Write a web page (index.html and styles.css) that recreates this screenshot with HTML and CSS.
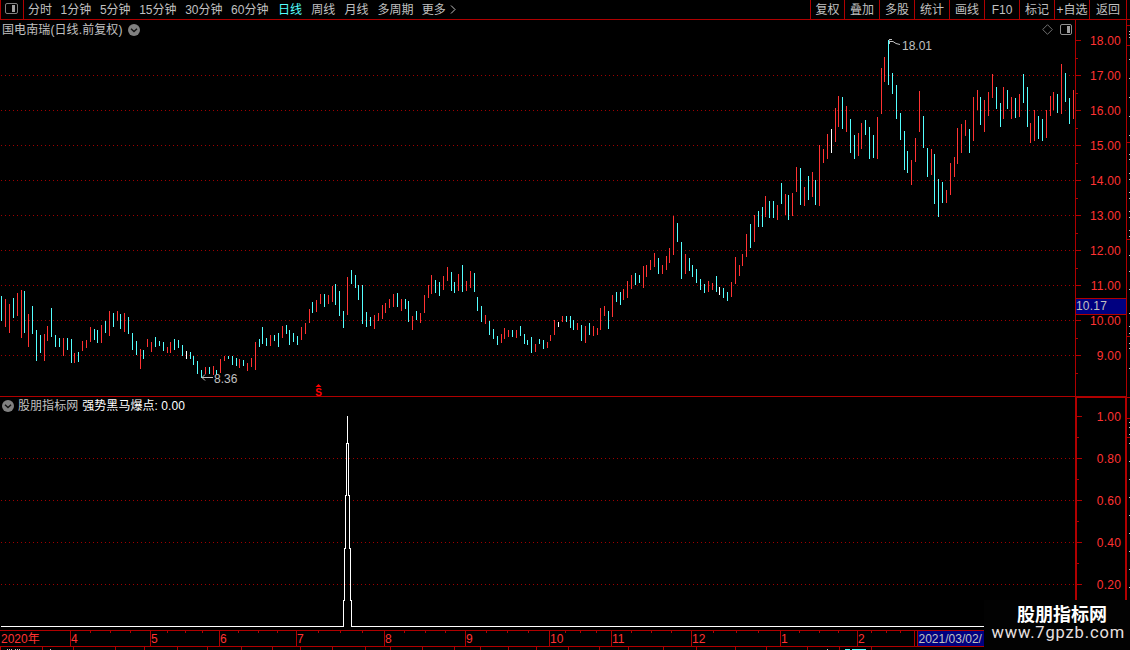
FILE: index.html
```
<!DOCTYPE html>
<html lang="zh-CN">
<head>
    <meta charset="utf-8">
    <title>国电南瑞 日线</title>
    <link rel="stylesheet" href="styles.css">
</head>
<body>
    <div class="terminal">
        <div class="toolbar">
            <div class="panel-toggle">
                <svg width="13" height="11" viewBox="0 0 13 11">
                    <rect x="0.5" y="0.5" width="12" height="10" rx="1.5" fill="none" stroke="#808080"/>
                    <rect x="7" y="2" width="3" height="7" fill="#a0a0a0"/>
                </svg>
            </div>
            <div class="periods minutes">
                <span>分时</span>
                <span>1分钟</span>
                <span>5分钟</span>
                <span>15分钟</span>
                <span>30分钟</span>
                <span>60分钟</span>
            </div>
            <div class="periods days">
                <span class="active">日线</span>
                <span>周线</span>
                <span>月线</span>
                <span>多周期</span>
                <span class="more">更多
                    <svg width="6" height="9" viewBox="0 0 6 9"><path d="M1 0.5L5 4.5L1 8.5" fill="none" stroke="#c0c0c0"/></svg>
                </span>
            </div>
            <div class="tools">
                <span>复权</span>
                <span>叠加</span>
                <span>多股</span>
                <span>统计</span>
                <span>画线</span>
                <span>F10</span>
                <span>标记</span>
                <span>+自选</span>
                <span>返回</span>
            </div>
        </div>

        <div class="content">
            <div class="charts">
                <div class="pane price">
                    <svg class="plot" id="pricePlot" width="1075" height="376" viewBox="0 20 1075 376">
                        <g id="priceGrid" class="grid"></g>
                        <path id="barsUp" class="bar up"/>
                        <path id="barsDown" class="bar down"/>
                        <path id="barsFlat" class="bar flat"/>
                        <path class="arrow" d="M889.5 44V40.5M889 39.5H892M889 41.5H893L896 43.5L900 44.5"/>
                        <text class="note" x="902" y="50">18.01</text>
                        <path class="arrow" d="M213 377.5H202M205 374.5L202 377.5L205 380.5"/>
                        <text class="note" x="214" y="383">8.36</text>
                        <path class="signal" d="M318.5 384L321.5 387H315.5Z"/>
                        <text class="signal" x="315.2" y="395.5">S</text>
                    </svg>
                    <div class="pane-title">
                        <span>国电南瑞(日线.前复权)</span>
                        <svg width="12" height="12" viewBox="0 0 12 12"><circle cx="6" cy="6" r="6" fill="#808080"/><path d="M3 4.7L6 7.5L9 4.7" fill="none" stroke="#111" stroke-width="1.4"/></svg>
                    </div>
                    <div class="pane-icons">
                        <svg width="11" height="11" viewBox="0 0 11 11"><path d="M5.5 0.7L10.3 5.5L5.5 10.3L0.7 5.5Z" fill="none" stroke="#707070"/></svg>
                        <svg width="12" height="11" viewBox="0 0 12 11"><rect x="0.5" y="0.5" width="11" height="10" rx="1.5" fill="none" stroke="#909090"/><rect x="7" y="2" width="3" height="7" fill="#a0a0a0"/></svg>
                    </div>
                </div>
                <div class="axis price-axis">
                    <span>18.00</span>
                    <span>17.00</span>
                    <span>16.00</span>
                    <span>15.00</span>
                    <span>14.00</span>
                    <span>13.00</span>
                    <span>12.00</span>
                    <span>11.00</span>
                    <span>10.00</span>
                    <span>9.00</span>
                    <div class="cursor-price">10.17</div>
                </div>

                <div class="pane indicator">
                    <svg class="plot" width="1075" height="233" viewBox="0 397 1075 233">
                        <g id="indicatorGrid" class="grid"></g>
                        <path class="line" d="M1 626.5H343.5V600H344.5V548H345.5V495H346.5V443H347.5V416V443H348.5V495H349.5V548H350.5V600H351.5V626.5H1075"/>
                    </svg>
                    <div class="pane-title">
                        <svg width="12" height="12" viewBox="0 0 12 12"><circle cx="6" cy="6" r="6" fill="#808080"/><path d="M3 4.7L6 7.5L9 4.7" fill="none" stroke="#111" stroke-width="1.4"/></svg>
                        <span>股朋指标网</span>
                        <span class="value">强势黑马爆点: 0.00</span>
                    </div>
                </div>
                <div class="axis indicator-axis">
                    <span>1.00</span>
                    <span>0.80</span>
                    <span>0.60</span>
                    <span>0.40</span>
                    <span>0.20</span>
                </div>
            </div>
            <svg class="side-strip" width="3" height="630" viewBox="1127 20 3 630">
                <path id="sideWhite" stroke="#c0c0c0"/>
                <path id="sideRed" stroke="#b00000"/>
            </svg>
        </div>

        <svg class="dates" width="1130" height="20" viewBox="0 630 1130 20">
            <path id="dateTicks" class="tick"/>
            <g id="dateLabels"></g>
            <rect x="918" y="631" width="70" height="15" fill="#000080"/>
            <text class="note" x="918.5" y="642.5">2021/03/02/</text>
            <path d="M7 649.5H13M15 649.5H18M19 649.5H21M50 649.5H52M827 649.5H829" stroke="#c0c0c0" stroke-dasharray="1 1"/>
            <path d="M845 649.5H850M852 649.5H866" stroke="#54ffff"/>
        </svg>

        <div class="watermark">
            <div class="site-name">股朋指标网</div>
            <div class="site-url">www.7gpzb.com</div>
        </div>
    </div>
    <script src="chart.js"></script>
</body>
</html>
```
FILE: styles.css
```
body {
    margin: 0;
    background-color: #000;
    color: #c0c0c0;
    font-family: "Liberation Sans", "Noto Sans CJK SC", sans-serif;
    font-size: 12px;
    line-height: 14px;
}
svg {
    display: block;
}
.terminal {
    position: relative;
    width: 1130px;
    height: 650px;
    overflow: hidden;
}
.toolbar {
    box-sizing: border-box;
    display: flex;
    height: 20px;
    border-bottom: 1px solid #b00000;
    line-height: 20px;
    white-space: nowrap;
}
.panel-toggle {
    box-sizing: border-box;
    width: 24px;
    padding: 3px 0 0 4px;
    border-left: 1px solid #b00000;
    border-right: 1px solid #b00000;
}
.periods {
    display: flex;
    height: 19px;
}
.minutes {
    box-sizing: border-box;
    width: 254px;
    padding-left: 4px;
    gap: 8.6px;
}
.days {
    gap: 9.2px;
}
.active {
    color: #54ffff;
}
.more {
    display: flex;
    align-items: center;
    gap: 4px;
    margin-left: -1px;
}
.tools {
    display: grid;
    grid-template-columns: 34px 35px 35px 35px 35px 35px 35px 35px 37px;
    height: 19px;
    margin-left: auto;
    margin-right: 3px;
    border-right: 1px solid #b00000;
}
.tools span {
    height: 19px;
    border-left: 1px solid #b00000;
    text-align: center;
}
.content {
    display: flex;
    height: 610px;
}
.charts {
    display: grid;
    grid-template-columns: 1075px 52px;
    grid-template-rows: 376px 234px;
}
.pane {
    position: relative;
}
.indicator {
    border-top: 1px solid #b00000;
}
.pane-title {
    position: absolute;
    top: 3px;
    left: 2px;
    display: flex;
    align-items: center;
    gap: 5px;
    white-space: nowrap;
}
.price .pane-title {
    letter-spacing: 0.1px;
}
.price .pane-title svg,
.indicator .pane-title svg {
    margin-top: -1px;
}
.indicator .pane-title {
    top: 2px;
    gap: 4px;
    letter-spacing: 0.05px;
}
.value {
    color: #fff;
}
.pane-icons {
    position: absolute;
    top: 4px;
    right: 3px;
    display: flex;
    gap: 7px;
}
.axis {
    position: relative;
    box-sizing: border-box;
    display: flex;
    flex-direction: column;
    color: #ff3232;
    text-align: right;
    letter-spacing: 0.2px;
}
.axis span {
    position: relative;
    padding-right: 5px;
}
/* major tick at each value, minor tick half a step below */
.axis span::before,
.axis span::after {
    content: "";
    position: absolute;
    left: 0;
    top: 50%;
    width: 5px;
    height: 1px;
    margin-top: -0.5px;
    background-color: #b00000;
}
.axis span::after {
    top: 100%;
    width: 2px;
}
.price-axis {
    padding-top: 3px;
    border-left: 1px solid #b00000;
    border-right: 1px solid #b00000;
}
.price-axis span {
    height: 35px;
    line-height: 36px;
}
.indicator-axis {
    border: 2px solid #b00000;
    border-bottom: none;
}
.indicator-axis span {
    top: -3px;
    height: 42px;
    padding-right: 4px;
    line-height: 44px;
}
.cursor-price {
    position: absolute;
    top: 278px;
    left: 0;
    width: 50px;
    height: 15px;
    border-top: 1px solid #b00000;
    border-bottom: 1px solid #b00000;
    background-color: #000080;
    color: #c0c0c0;
    text-align: left;
}
.grid line {
    stroke: #a00000;
    stroke-dasharray: 1 3;
}
.bar {
    fill: none;
    shape-rendering: crispEdges;
}
.up {
    stroke: #ff3232;
}
.down {
    stroke: #54ffff;
}
.flat {
    stroke: #fff;
}
.line {
    fill: none;
    stroke: #fff;
    shape-rendering: crispEdges;
}
.arrow {
    fill: none;
    stroke: #c0c0c0;
}
.note {
    fill: #c0c0c0;
}
.signal {
    fill: #f00;
    font-size: 10px;
    font-weight: bold;
}
.dates {
    background-color: #000;
}
.tick {
    fill: none;
    stroke: #b00000;
}
.month {
    fill: #ff3232;
}
.watermark {
    position: absolute;
    right: 0;
    bottom: 0;
    box-sizing: border-box;
    width: 146px;
    height: 50px;
    padding-top: 3px;
    padding-right: 5px;
    background-color: #020202;
    color: #fff;
    text-align: right;
    white-space: nowrap;
}
.site-name {
    padding-right: 18px;
    font-family: "Noto Sans CJK SC", sans-serif;
    font-size: 18px;
    font-weight: bold;
    line-height: 21px;
}
.site-url {
    color: #e8e0e0;
    font-family: Roboto, sans-serif;
    font-size: 16.5px;
    line-height: 18px;
    letter-spacing: 0.85px;
}
```
FILE: chart.js
```
// daily bars: x, high, low, direction (r = up, c = down, w = flat)
var bars = "1 296 321c,5 299 327r,9 304 333r,13 298 318c,17 293 316r,21 290 338r,24 291 333c,28 314 347r,32 306 334c," +
    "36 330 361c,40 335 353c,44 334 361r,47 326 341r,51 308 337c,55 335 347c,59 338 347c,63 338 356r,67 338 350c," +
    "71 339 363c,74 353 363r,78 352 362c,82 341 351r,86 340 348r,90 327 342r,94 329 340c,97 330 343c,101 325 343r," +
    "105 321 333c,109 311 336r,113 313 327c,117 311 321r,120 314 329c,124 313 332r,128 317 334c,132 333 350c," +
    "136 341 355c,140 349 369r,143 350 359c,147 339 347r,151 342 352r,155 337 347c,159 341 346c,163 342 351c," +
    "167 347 353r,170 342 353r,174 339 350c,178 340 348c,182 345 356c,186 351 359w,190 352 359c,193 356 365c," +
    "197 361 374c,201 370 378c,205 367 374r,209 367 374c,213 366 375r,216 370 375c,220 359 373r,224 356 361r," +
    "228 356 359c,232 356 365c,236 358 366c,239 359 368r,243 360 366c,247 363 371r,251 358 367r,255 342 370r," +
    "259 339 347c,262 327 344c,266 338 346c,270 335 346r,274 335 341c,278 333 347c,282 326 338r,286 325 334c," +
    "289 330 345c,293 333 342c,297 336 345c,301 327 340r,305 323 334r,309 309 323r,312 302 313c,316 300 312r," +
    "320 294 304r,324 294 307c,328 295 304r,332 286 302r,335 284 305c,339 291 316c,343 311 328c,347 277 315r," +
    "351 270 284c,355 275 288c,358 285 300c,362 285 324c,366 312 327c,370 317 326c,374 315 329r,378 313 321r," +
    "382 305 319r,385 303 313r,389 299 308r,393 294 307r,397 293 307c,401 299 311r,405 299 309c,408 301 322c," +
    "412 316 330r,416 311 320c,420 313 323r,424 295 313r,428 285 298r,431 275 294r,435 280 293c,439 282 296c," +
    "443 276 290r,447 267 281r,451 272 291c,454 282 293c,458 274 291r,462 265 292c,466 281 291r,470 271 288r," +
    "474 273 292c,477 297 311c,481 306 322c,485 315 324r,489 321 335c,493 329 339c,497 336 345c,501 334 343r," +
    "504 328 339r,508 330 337r,512 330 337c,516 330 338r,520 326 336c,524 334 344c,527 340 345c,531 337 353c," +
    "535 344 352r,539 339 344c,543 340 349c,547 342 348r,550 335 341r,554 320 335r,558 322 327w,562 316 322r," +
    "566 316 322c,570 316 328c,573 320 330c,577 323 330r,581 325 341c,585 326 343r,589 323 335c,593 326 336r," +
    "597 328 335r,600 308 330r,604 306 316r,608 311 329c,612 295 317r,616 292 302c,620 292 305c,623 289 300r," +
    "627 281 298r,631 275 289r,635 273 285c,639 275 283c,643 266 288r,646 265 277r,650 260 270r,654 253 267r," +
    "658 258 274c,662 265 274r,666 256 270r,669 248 263r,673 216 255r,677 223 242c,681 242 279c,685 254 274r," +
    "689 258 271c,692 265 277c,696 269 283c,700 279 290c,704 284 293c,708 281 292r,712 283 290r,716 276 292c," +
    "719 287 295w,723 288 298c,727 292 301c,731 282 297r,735 257 284r,739 265 276r,742 254 266r,746 234 257r," +
    "750 224 248c,754 215 242r,758 211 227c,762 207 227c,765 196 217r,769 201 218c,773 201 218c,777 205 220r," +
    "781 183 204c,785 194 215r,788 195 220c,792 193 216r,796 167 192r,800 168 205c,804 187 206r,808 176 200c," +
    "812 172 197r,815 180 205c,819 145 206r,823 149 163r,827 134 159r,831 129 153w,835 108 142r,838 96 127r," +
    "842 97 129c,846 106 132r,850 119 153c,854 135 159c,858 133 156r,861 123 149r,865 120 135c,869 127 159c," +
    "873 135 158c,877 117 159r,881 68 114r,884 57 82r,888 40 85c,892 73 94c,896 85 119c,900 113 140c," +
    "904 131 170c,907 151 173c,911 160 185r,915 138 162r,919 91 132r,923 116 148c,927 148 177c,931 149 175r," +
    "934 154 204c,938 179 217c,942 182 203c,946 190 203r,950 163 195r,954 157 177r,957 128 164r,961 124 153r," +
    "965 120 136r,969 129 153c,973 97 141r,977 90 110r,980 97 125c,984 100 132r,988 92 116r,992 74 98r," +
    "996 87 109c,1000 103 127c,1003 87 119r,1007 90 109c,1011 97 119r,1015 98 118c,1019 94 117r,1023 74 103c," +
    "1027 87 127c,1030 123 143r,1034 110 141r,1038 116 139c,1042 119 141c,1046 110 138r,1050 96 116r," +
    "1053 92 110r,1057 94 113c,1061 64 114r,1065 73 102c,1069 98 124c,1073 90 119r";

var paths = { r: "", c: "", w: "" };
bars.split(",").forEach(function (bar) {
    var type = bar.slice(-1);
    var p = bar.slice(0, -1).split(" ");
    paths[type] += "M" + (+p[0] + 0.5) + " " + p[1] + "V" + p[2];
});
document.getElementById("barsUp").setAttribute("d", paths.r);
document.getElementById("barsDown").setAttribute("d", paths.c);
document.getElementById("barsFlat").setAttribute("d", paths.w);

function drawGrid(id, from, to, step) {
    var html = "";
    for (var y = from; y <= to; y += step) {
        html += '<line x1="1" x2="1075" y1="' + (y + 0.5) + '" y2="' + (y + 0.5) + '"/>';
    }
    document.getElementById(id).innerHTML = html;
}
drawGrid("priceGrid", 75, 355, 35);
drawGrid("indicatorGrid", 458, 584, 42);

// date axis
var months = [[0, "2020年"], [70, "4"], [150, "5"], [219, "6"], [296, "7"], [384, "8"], [465, "9"], [549, "10"],
    [611, "11"], [691, "12"], [780, "1"], [857, "2"], [914, ""], [917, ""]];
var weeks = [90, 110, 130, 167, 185, 202, 238, 258, 277, 318, 340, 362, 404, 425, 445, 486, 507, 528,
    565, 580, 596, 631, 651, 671, 713, 736, 758, 799, 819, 838, 871, 886, 900];
var lower = [0, 42, 73, 115, 144, 177, 207, 241, 272, 300, 332, 365, 390, 422, 454, 480, 508, 536,
    568, 599, 628, 663, 696, 735, 766, 807, 839, 871];
var ticks = "M0 630.5H1130M0 646.5H1130";
var labels = "";
months.forEach(function (m) {
    if (m[0] > 0) {
        ticks += "M" + (m[0] + 0.5) + " 630V646";
    }
    labels += '<text class="month" x="' + (m[0] + 1) + '" y="642.5">' + m[1] + "</text>";
});
weeks.forEach(function (x) {
    ticks += "M" + (x + 0.5) + " 630V633";
});
lower.forEach(function (x) {
    ticks += "M" + (x + 0.5) + " 647V650";
});
document.getElementById("dateTicks").setAttribute("d", ticks);
document.getElementById("dateLabels").innerHTML = labels;

// clipped edge of the neighbouring quote panel
function drawSide(id, rows, x) {
    document.getElementById(id).setAttribute("d", rows.map(function (y) {
        return "M" + x + " " + (y + 0.5) + "H1130";
    }).join(""));
}
drawSide("sideWhite", [31, 34, 37, 59, 78, 97, 116, 135, 154, 159, 173, 179, 192, 198, 211, 217, 230, 236, 255,
    271, 289, 313, 326, 333, 343, 348, 368, 422, 427, 434, 443, 461, 479, 497, 515, 533, 551, 569, 587], 1129);
drawSide("sideRed", [25, 45, 142, 239, 336, 397, 418, 437], 1127);
```
